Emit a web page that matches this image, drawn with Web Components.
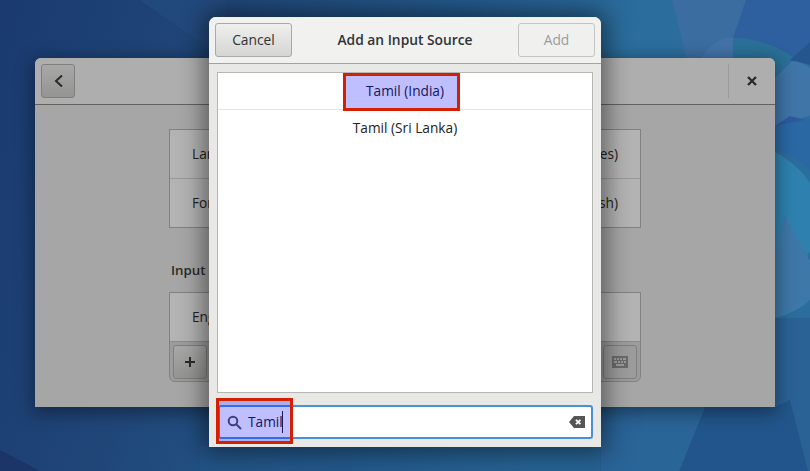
<!DOCTYPE html>
<html><head><meta charset="utf-8">
<style>
html,body{margin:0;padding:0;width:810px;height:471px;overflow:hidden}
body{font-family:"Open Sans","Noto Sans",sans-serif;font-size:14px;color:#2e3436}
</style></head><body>
<x-desktop>
  <x-settings></x-settings>
  <x-dialog></x-dialog>
</x-desktop>
<script>
function def(name, css, html, init){
  customElements.define(name, class extends HTMLElement{
    constructor(){super();const r=this.attachShadow({mode:'open'});r.innerHTML='<style>'+css+'</style>'+html;if(init)init(this,r);}
  });
}
def('x-desktop',`
:host{display:block;position:relative;width:810px;height:471px;overflow:hidden;background:#1f4678}
svg{position:absolute;inset:0}
`,`<svg width="810" height="471" viewBox="0 0 810 471">
<defs>
<linearGradient id="g" x1="0" y1="0" x2="1" y2="0.15"><stop offset="0" stop-color="#1a3a70"/><stop offset=".26" stop-color="#204678"/><stop offset=".55" stop-color="#24598c"/><stop offset=".78" stop-color="#2b6d9c"/><stop offset="1" stop-color="#2b6d9c"/></linearGradient>
<filter id="s"><feGaussianBlur stdDeviation=".6"/></filter>
</defs>
<rect width="810" height="471" fill="url(#g)"/>
<g filter="url(#s)">
<polygon points="140,0 225,60 225,0" fill="#214a7c"/>
<polygon points="672,0 746,0 733,60 687,60" fill="#3b6da0"/>
<path d="M700 60Q715 36 735 38L733 60z" fill="#4373a8"/>
<polygon points="746,0 815,0 815,42 790,62 775,52 733,38" fill="#2e5f9f"/>
<path d="M733 38Q765 38 795 58L775 80L775 60L733 60z" fill="#2a7098"/>
<polygon points="815,38 790,60 815,66" fill="#25568e"/>
<path d="M775 78L792 61Q805 62 815 72V114L775 126z" fill="#4074a8"/>
<polygon points="775,126 790,116 815,122 775,135" fill="#2f5a9c"/>
<path d="M775 126L815 118V175Q795 155 775 150z" fill="#2c68a4"/>
<path d="M775 152Q800 165 815 190V245L775 300z" fill="#2d81af"/>
<path d="M785 215L815 270V295Q800 312 775 318V250z" fill="#3c78a8"/>
<rect x="775" y="318" width="40" height="160" fill="#2b6296"/>
<polygon points="600,407 705,407 679,471 600,471" fill="#2b6497"/>
<polygon points="705,407 775,407 790,400 808,471 679,471" fill="#23558b"/>
<polygon points="645,407 705,407 679,471 632,471" fill="#2b6598"/>
<polygon points="0,450 40,471 0,471" fill="#1a3468"/>
<polygon points="200,447 601,447 601,471 200,471" fill="#22568a" opacity=".5"/>
</g>
</svg><slot></slot>`);

def('x-button',`
:host{display:inline-flex;align-items:center;justify-content:center;box-sizing:border-box;width:77px;height:34px;padding-bottom:2px;border:1px solid #a9a9a5;border-radius:3px;background:linear-gradient(#efefee,#d5d5d3);color:#2e3436;font:13.800px "Open Sans",sans-serif}
:host([disabled]){background:#f0f0ef;border-color:#c4c4c1;color:#9a9d9c}
`,`<slot></slot>`);

def('x-dialog',`
:host{position:absolute;left:209px;top:17px;width:392px;height:430px;display:flex;flex-direction:column;background:#e8e8e7;border-radius:7px 7px 0 0;box-shadow:0 0 24px 5px rgba(0,0,0,.48)}
header{box-sizing:border-box;height:47px;padding:6px 6px 6px;display:flex;align-items:center;justify-content:space-between;background:#f1f1f0;border-bottom:1px solid #a3a39f;border-radius:7px 7px 0 0}
h1{margin:-2px 0 0;font:600 13.800px "Open Sans",sans-serif;color:#2e3436}
main{flex:1;display:flex;flex-direction:column;padding:8px 8px 8px;gap:12px;position:relative}
.list{box-sizing:border-box;height:321px;border:1px solid #b6b6b3;background:#fff}
.hl{position:absolute;box-sizing:border-box;border:3px solid #d42000;background:rgba(0,0,255,.25)}
.hl.a{left:134px;top:9px;width:117px;height:38px}
.hl.b{left:7px;top:334px;width:77px;height:46px}
`,`<header><x-button>Cancel</x-button><h1>Add an Input Source</h1><x-button disabled>Add</x-button></header>
<main>
<div class="list"><x-source>Tamil (India)</x-source><x-source last>Tamil (Sri Lanka)</x-source></div>
<x-search></x-search>
<div class="hl a"></div><div class="hl b"></div>
</main>`);

def('x-source',`
:host{display:flex;align-items:center;justify-content:center;box-sizing:border-box;height:37px;padding-bottom:2px;border-bottom:1px solid #e4e4e2;color:#222;font:13.700px "Open Sans",sans-serif}
:host([last]){border-bottom:0}
`,`<slot></slot>`);

def('x-search',`
:host{display:flex;align-items:center;box-sizing:border-box;height:34px;margin:0 0 0 1px;width:375px;padding:0 6px 0 7px;border:2px solid #4a90d9;border-radius:3px;background:#fff;font:13.700px "Open Sans",sans-serif;color:#222}
.t{margin:-2px 0 0 6px}
.c{display:inline-block;width:1px;height:22px;background:#222;margin-left:-1px}
.sp{flex:1}
`,`<svg width="15" height="15" viewBox="0 0 15 15" fill="none" stroke="#555" stroke-width="2"><circle cx="6" cy="6" r="4.300"/><path d="M9.500 9.500l4.500 4.500"/></svg><span class="t">Tamil</span><span class="c"></span><span class="sp"></span>
<svg width="16" height="12" viewBox="0 0 16 12"><path fill="#555" fill-rule="evenodd" d="M5 0h11v12H5L0 6zM7.500 3.200L6.300 4.400 8 6 6.300 7.600l1.200 1.200L9.200 7.200l1.600 1.600L12 7.600 10.400 6 12 4.400l-1.200-1.200L9.200 4.800z"/></svg>`);

def('x-settings',`
:host{position:absolute;left:35px;top:58px;width:740px;height:349px;display:flex;flex-direction:column;background:#a6a6a6;border-radius:6px 6px 0 0;box-shadow:0 4px 18px 2px rgba(0,0,0,.4);color:#222}
header{box-sizing:border-box;height:47px;padding:6px;display:flex;align-items:center;justify-content:space-between;background:#aeaeae;border-bottom:1px solid #62625e;border-radius:6px 6px 0 0}
.back{box-sizing:border-box;width:34px;height:34px;padding-left:2px;border:1px solid #7f7f7d;border-radius:3px;background:linear-gradient(#a8a8a8,#949493);display:flex;align-items:center;justify-content:center}
.close{box-sizing:border-box;width:47px;height:34px;margin-right:-6px;padding-right:1px;border-left:1px solid #999;display:flex;align-items:center;justify-content:center}
main{display:flex;flex-direction:column;width:472px;margin:24px auto 0;font:13.700px "Open Sans",sans-serif}
.box{border:1px solid #818181;background:#b3b3b3}
.box.one{height:99px;box-sizing:border-box}
.sec{margin:32px 0 12px 2px;font-weight:600;font-size:13.300px;line-height:20px;color:#2a2a2a;height:20px;}
.in{height:90px;box-sizing:border-box;display:flex;flex-direction:column;border-radius:0 0 6px 6px;background:#9c9c9c}
.in x-row{background:#b3b3b3;border-bottom:1px solid #8a8a8a}
.bar{flex:1;display:flex;justify-content:space-between;align-items:center;padding:0 3px}
.b{box-sizing:border-box;width:34px;height:34px;border:1px solid #7f7f7d;border-radius:3px;display:flex;align-items:center;justify-content:center}
.b.p{background:linear-gradient(#a8a8a8,#949493)}
`,`<header><div class="back"><svg width="12" height="14" viewBox="0 0 12 14" fill="none" stroke="#2a2a2a" stroke-width="2"><path d="M9 1.500L3 7l6 5.500"/></svg></div><div class="close"><svg width="12" height="12" viewBox="0 0 12 12" fill="none" stroke="#2a2a2a" stroke-width="2.300"><path d="M2 2l8 8M10 2l-8 8"/></svg></div></header>
<main>
<div class="box one"><x-row a="Language" b="English (United States)"></x-row><x-row a="Formats" b="United States (English)" last></x-row></div>
<div class="sec">Input Sources</div>
<div class="box in"><x-row a="English (US)" b=""></x-row><div class="bar"><div class="b p"><svg width="12" height="12" viewBox="0 0 12 12" fill="none" stroke="#2a2a2a" stroke-width="2"><path d="M6 1v10M1 6h10"/></svg></div><div class="b"><svg width="16" height="12" viewBox="0 0 16 12"><path fill="#6a6a6a" fill-rule="evenodd" d="M0 0h16v12H0zM2 2v2h2V2zM5 2v2h2V2zM8 2v2h2V2zM11 2v2h3V2zM2 5v2h3V5zM6 5v2h2V5zM9 5v2h2V5zM12 5v2h2V5zM4 8v2h8V8z"/></svg></div></div></div>
</main>`);

def('x-row',`
:host{display:flex;align-items:center;justify-content:space-between;box-sizing:border-box;height:49px;padding:0 22px 2px;border-bottom:1px solid #999}
:host([last]){border-bottom:0}
`,`<span id="a"></span><span id="b"></span>`,null);
document.querySelector('x-settings').shadowRoot.querySelectorAll('x-row').forEach(r=>{
  r.shadowRoot.getElementById('a').textContent=r.getAttribute('a');
  r.shadowRoot.getElementById('b').textContent=r.getAttribute('b');
});
</script>
</body></html>
